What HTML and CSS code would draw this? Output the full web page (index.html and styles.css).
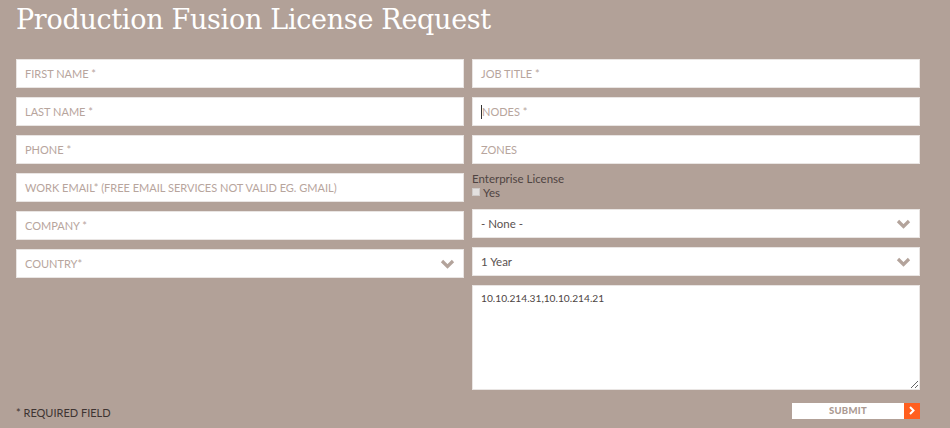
FILE: index.html
```html
<!DOCTYPE html>
<html lang="en">
<head>
<meta charset="utf-8">
<title>Production Fusion License Request</title>
<link rel="stylesheet" href="styles.css">
</head>
<body>
<div class="page">
  <h1 class="title">Production Fusion License Request</h1>
  <div class="columns">
    <div class="col">
      <div class="field"><span class="ph">FIRST NAME *</span></div>
      <div class="field"><span class="ph">LAST NAME *</span></div>
      <div class="field"><span class="ph">PHONE *</span></div>
      <div class="field"><span class="ph">WORK EMAIL* (FREE EMAIL SERVICES NOT VALID EG. GMAIL)</span></div>
      <div class="field"><span class="ph">COMPANY *</span></div>
      <div class="field select"><span class="ph">COUNTRY*</span>
        <svg class="chev" width="15" height="10" viewBox="0 0 15 10"><path d="M2 2 L7.5 7.5 L13 2" fill="none" stroke="#b3a39b" stroke-width="3.2"/></svg>
      </div>
    </div>
    <div class="col">
      <div class="field"><span class="ph">JOB TITLE *</span></div>
      <div class="field"><span class="caret"></span><span class="ph">NODES *</span></div>
      <div class="field"><span class="ph">ZONES</span></div>
      <div class="check-block">
        <div class="check-label">Enterprise License</div>
        <label class="check-row"><span class="box"></span>Yes</label>
      </div>
      <div class="field select"><span class="val">- None -</span>
        <svg class="chev" width="15" height="10" viewBox="0 0 15 10"><path d="M2 2 L7.5 7.5 L13 2" fill="none" stroke="#b3a39b" stroke-width="3.2"/></svg>
      </div>
      <div class="field select"><span class="val">1 Year</span>
        <svg class="chev" width="15" height="10" viewBox="0 0 15 10"><path d="M2 2 L7.5 7.5 L13 2" fill="none" stroke="#b3a39b" stroke-width="3.2"/></svg>
      </div>
      <textarea class="area">10.10.214.31,10.10.214.21</textarea>
    </div>
  </div>
  <div class="footer">
    <span class="req">* REQUIRED FIELD</span>
    <button class="submit"><span class="submit-text">SUBMIT</span><span class="submit-arrow"><svg width="6" height="9" viewBox="0 0 6 9"><path d="M1 1 L4.5 4.5 L1 8" fill="none" stroke="#fff" stroke-width="2"/></svg></span></button>
  </div>
</div>
</body>
</html>
```

FILE: styles.css
```css
html, body {
  margin: 0;
  padding: 0;
  background: #b2a198;
}
.page {
  padding: 0 30px 0 16px;
  font-family: Lato, "Open Sans", sans-serif;
}
.title {
  margin: 0;
  padding-top: 2px;
  height: 57px;
  font-family: "DejaVu Serif", serif;
  font-weight: normal;
  font-size: 27px;
  line-height: 36px;
  color: #ffffff;
  letter-spacing: -0.3px;
}
.columns {
  display: flex;
  gap: 8px;
}
.col {
  flex: 1;
  display: flex;
  flex-direction: column;
  gap: 9px;
}
.field {
  box-sizing: border-box;
  height: 29px;
  background: #fff;
  border: 1px solid #e9e5e3;
  display: flex;
  align-items: center;
  padding: 0 8px;
  font-size: 11px;
}
.ph {
  color: #b7a59d;
}
.val {
  color: #5a5250;
  font-size: 11.5px;
}
.select {
  justify-content: space-between;
  padding-right: 8px;
}
.chev {
  display: block;
}
.caret {
  width: 1px;
  height: 14px;
  background: #333;
}
.check-block {
  height: 27px;
  font-size: 11.5px;
  color: #4f4442;
  line-height: 13.5px;
  margin-top: -1px;
  margin-bottom: 1px;
}
.check-row {
  display: flex;
  align-items: center;
  gap: 3px;
}
.box {
  width: 8px;
  height: 8px;
  background: #e3e0df;
  border: 1px solid #cfcac8;
  box-sizing: border-box;
}
.area {
  box-sizing: border-box;
  height: 105px;
  border: 1px solid #e9e5e3;
  padding: 6px 8px;
  font-family: Lato, "Open Sans", sans-serif;
  font-size: 10.2px;
  color: #4d4543;
  resize: vertical;
  outline: none;
}
.footer {
  display: flex;
  justify-content: space-between;
  align-items: center;
  margin-top: 12px;
}
.req {
  font-size: 11px;
  color: #3e3432;
  padding-top: 4px;
}
.submit {
  display: flex;
  padding: 0;
  border: 0;
  height: 16px;
  background: none;
  cursor: pointer;
}
.submit-text {
  width: 112px;
  height: 16px;
  background: #fff;
  color: #ab9a92;
  font-family: Lato, sans-serif;
  font-weight: 900;
  font-size: 9.5px;
  line-height: 16px;
  text-align: center;
  letter-spacing: 0.3px;
}
.submit-arrow {
  width: 16px;
  height: 16px;
  background: #ff5f1f;
  display: flex;
  align-items: center;
  justify-content: center;
}
```
